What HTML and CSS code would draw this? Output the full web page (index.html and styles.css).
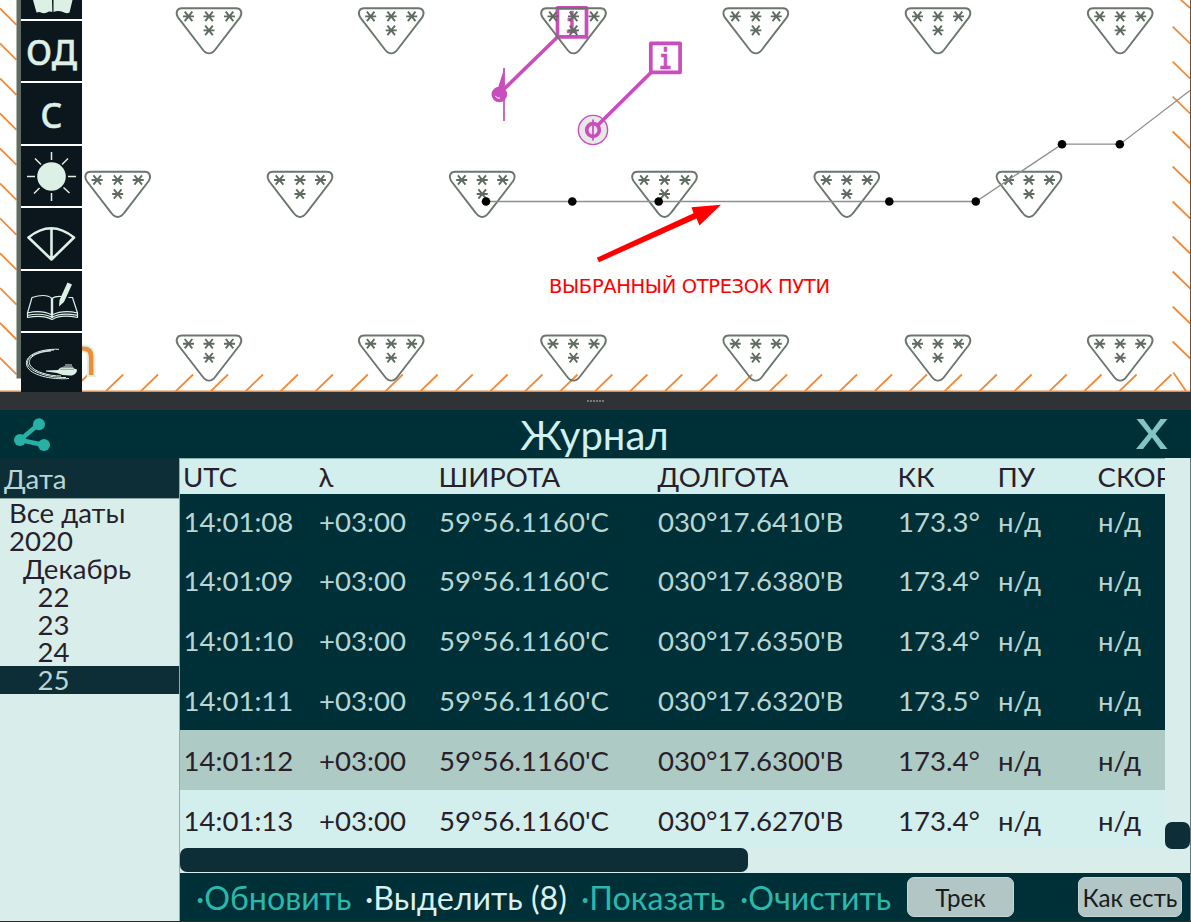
FILE: index.html
```
<!DOCTYPE html>
<html lang="ru">
<head>
<meta charset="utf-8">
<title>Журнал</title>
<link rel="stylesheet" href="styles.css">
</head>
<body>
<div class="app">
  <section class="map">
    <svg class="chart" width="1191" height="392" viewBox="0 0 1191 392">
      <defs>
        <path id="star" d="M-5.500 0H5.500M-3.800 -4.700L3.800 4.700M3.800 -4.700L-3.800 4.700" class="star"/>
        <g id="ice">
          <path class="tri" d="M-27 0H27C32 0 34 4.500 30.800 9.500L6.500 41C2.500 46.500 -2.500 46.500 -6.500 41L-30.800 9.500C-34 4.500 -32 0 -27 0Z"/>
          <use href="#star" x="-20.500" y="8.200"/><use href="#star" y="8.200"/><use href="#star" x="20.500" y="8.200"/><use href="#star" y="22.200"/>
        </g>
      </defs>
      <path class="hatch" d="M0 8.400l16.500 16.500M0 43.400l16.500 16.500M0 78.400l16.500 16.500M0 113.400l16.500 16.500M0 148.400l16.500 16.500M0 183.400l16.500 16.500M0 218.300l16.500 16.500M0 253.200l16.500 16.500M0 288.100l16.500 16.500M0 323l16.500 16.500M0 357.900l16.500 16.500"/>
      <path class="hatch" d="M1180 -1l10 9M1172.700 26.700l17.500 17M1172.700 61.600l17.500 17M1172.700 96.600l17.500 17M1172.700 131.500l17.500 17M1172.700 166.500l17.500 17M1172.700 201.500l17.500 17M1172.700 236.500l17.500 17M1172.700 271.500l17.500 17M1172.700 306.500l17.500 17M1172.700 341.500l17.500 17M1173.300 372.500L1186 391M0 391.400H1190"/>
      <path class="hatch" d="M70.800 391.500l17.500 -17M105.700 391.500l17.500 -17M140.600 391.500l17.500 -17M175.600 391.500l17.500 -17M210.500 391.500l17.500 -17M245.500 391.500l17.500 -17M280.400 391.500l17.500 -17M315.400 391.500l17.500 -17M350.300 391.500l17.500 -17M385.300 391.500l17.500 -17M420.200 391.500l17.500 -17M455.200 391.500l17.500 -17M490.100 391.500l17.500 -17M525 391.500l17.500 -17M560 391.500l17.500 -17M594.900 391.500l17.500 -17M629.900 391.500l17.500 -17M664.800 391.500l17.500 -17M699.800 391.500l17.500 -17M734.700 391.500l17.500 -17M769.600 391.500l17.500 -17M804.600 391.500l17.500 -17M839.500 391.500l17.500 -17M874.500 391.500l17.500 -17M909.400 391.500l17.500 -17M944.400 391.500l17.500 -17M979.300 391.500l17.500 -17M1014.200 391.500l17.500 -17M1049.200 391.500l17.500 -17M1084.100 391.500l17.500 -17M1119.100 391.500l17.500 -17M1154 391.500l17.500 -17"/>
      <rect x="16.500" width="5" height="378.500" fill="#5f6b60"/>
      <text class="place halo" x="65.500" y="375">n</text><text class="place" x="65.500" y="375">n</text>
      <g class="pink">
        <rect x="557.500" y="7.800" width="29" height="29"/><path d="M557.500 37L499 94"/>
        <rect x="650.800" y="43.300" width="29.300" height="29"/>
        <circle cx="593" cy="130" r="14.600" class="ring"/><path d="M651 72.500L598 125"/>
        <circle cx="593" cy="130" r="6.300"/><path class="thin" d="M593 119.500V140.500M504 68V121"/>
        <path d="M504.500 67.500V94H496Z" class="pinkfill"/><circle cx="499.300" cy="94.500" r="7.800" class="pinkfill"/>
        <path d="M495 96q3 3 5 2" class="glint"/>
      </g>
      <text class="info" transform="translate(571.500 33) scale(.72 1)">i</text><text class="info" transform="translate(665 69) scale(.72 1)">i</text>
      <use href="#ice" x="209" y="8.200"/><use href="#ice" x="391.200" y="8.200"/><use href="#ice" x="573.500" y="8.200"/><use href="#ice" x="755.800" y="8.200"/><use href="#ice" x="938" y="8.200"/><use href="#ice" x="1120.200" y="8.200"/>
      <use href="#ice" x="117.700" y="171.800"/><use href="#ice" x="300" y="171.800"/><use href="#ice" x="482.200" y="171.800"/><use href="#ice" x="664.500" y="171.800"/><use href="#ice" x="846.800" y="171.800"/><use href="#ice" x="1029" y="171.800"/>
      <use href="#ice" x="209" y="335.500"/><use href="#ice" x="391.200" y="335.500"/><use href="#ice" x="573.500" y="335.500"/><use href="#ice" x="755.800" y="335.500"/><use href="#ice" x="938" y="335.500"/><use href="#ice" x="1120.200" y="335.500"/>
      <path class="track" d="M486 201.500H976L1062 144.200H1120L1190 90.500"/>
      <g fill="#000"><circle cx="486" cy="201.500" r="4.300"/><circle cx="572.300" cy="201.500" r="4.300"/><circle cx="658.700" cy="201.500" r="4.300"/><circle cx="889.300" cy="201.500" r="4.300"/><circle cx="975.800" cy="201.500" r="4.300"/><circle cx="1062" cy="144.200" r="4.300"/><circle cx="1119.800" cy="144.200" r="4.300"/></g>
      <path fill="#f00" d="M596.800 257.700L693.500 213.300L691.500 207.300L721 204.800L699.500 225.500L696.500 218.500L599 262.200Z"/>
      <text class="note" x="549" y="293" textLength="281">ВЫБРАННЫЙ ОТРЕЗОК ПУТИ</text>
      <path d="M1190.500 0V392" stroke="#70503c"/>
    </svg>
    <nav class="tools">
      <div class="tool first"><svg width="61" height="18" viewBox="0 0 61 18"><path fill="#dcf0e6" d="M12 0H31L31.300 12Q28 11 26 12.500Q22 14 18.500 12L15.500 12.500ZM32.500 0H51.500L48.500 12.500Q45 14 42 12Q37 10 32.500 12Z"/></svg></div>
      <div class="tool"><span class="od">ОД</span></div>
      <div class="tool"><span class="od">С</span></div>
      <div class="tool"><svg width="61" height="61" viewBox="0 0 61 61"><circle cx="30.500" cy="31.500" r="14.300" fill="#dcf0e6"/><path class="ic" stroke-width="1.500" d="M30.500 7V15M30.500 48V56M6 31.500H14M47 31.500H55M14 13.500L20 19.500M47 13.500L41 19.500M13 48.500L18.500 43M48.500 48L42.500 42.500"/></svg></div>
      <div class="tool"><svg width="61" height="60" viewBox="0 0 61 60"><path class="ic" stroke-width="2.600" d="M7.500 28.500Q30 10 53 28.500L30.500 50.500ZM30.500 20V50"/></svg></div>
      <div class="tool"><svg width="61" height="60" viewBox="0 0 61 60"><path class="ic" stroke-width="1.200" d="M47.500 26.500H51.500L56.500 42Q42 38.500 31 44Q20 38.500 6.500 42L11 26.500Q25 22 31 27.500Q34 25 40.500 25.500M30.400 27.500V47M31.600 27.500V47M6.500 42V46.500Q22 43.500 31 48.500Q40 43 56.500 46.500V42M6.500 44.300Q22 41.500 31 46.300Q40 41 56.500 44.300"/><path fill="#dcf0e6" d="M46.500 11.500L51 13.500L43 31L38 35.500L38.500 29Z"/></svg></div>
      <div class="tool last"><svg width="61" height="58" viewBox="0 0 61 58"><path class="ic" stroke-width="1" d="M38 16.300C18 15.500 2 23 6 33C9 42 30 47 48 45.500M30 18C13 19 6 26 9 32C13 39 28 43 40 43M33 17C16 18 4 24 7 32C10 39 28 45 45 44.500"/><path fill="#dcf0e6" d="M25 37.500L37 37L39 35L43 33.500H51.500L53 35.500L56 36.500Q56 41 51 42.500Q42 43 36 40L25 38.500Z"/><path d="M39 36.300H53M41 34.500H52" stroke="#6d7d78" stroke-width=".7"/><path class="ic" d="M44 32H51"/></svg></div>
    </nav>
  </section>
  <div class="splitter"><i></i><i></i><i></i><i></i><i></i><i></i></div>
  <header class="titlebar">
    <svg class="share" width="40" height="36" viewBox="0 0 40 36"><path d="M29 8L10 24L34 29" fill="none" stroke="#26b0a6" stroke-width="4.500"/><g fill="#26b0a6"><circle cx="29" cy="8.300" r="6"/><circle cx="10" cy="24" r="6"/><circle cx="34" cy="29" r="6"/></g></svg>
    <h1 class="title">Журнал</h1>
    <svg class="close" width="32" height="30" viewBox="0 0 32 30"><path fill="#82c4c6" d="M.5 0H7.500L16 11.500L24.500 0H31.500L19.500 14.800L31.500 30H24.500L16 18.500L7 30H0L12.500 14.800Z"/></svg>
  </header>
  <main class="journal">
    <aside class="dates">
      <div class="dates-head">Дата</div>
      <ul class="tree"><li>Все даты</li><li>2020</li><li class="month">Декабрь</li><li class="day">22</li><li class="day">23</li><li class="day">24</li><li class="day active">25</li></ul>
    </aside>
    <section class="log">
      <div class="view">
        <div class="table">
          <div class="row head"><span>UTC</span><span>λ</span><span>ШИРОТА</span><span>ДОЛГОТА</span><span>КК</span><span>ПУ</span><span>СКОРОСТЬ</span></div>
          <div class="row start"><span>14:01:08</span><span>+03:00</span><span>59°56.1160'С</span><span>030°17.6410'В</span><span>173.3°</span><span>н/д</span><span>н/д</span></div>
          <div class="row"><span>14:01:09</span><span>+03:00</span><span>59°56.1160'С</span><span>030°17.6380'В</span><span>173.4°</span><span>н/д</span><span>н/д</span></div>
          <div class="row"><span>14:01:10</span><span>+03:00</span><span>59°56.1160'С</span><span>030°17.6350'В</span><span>173.4°</span><span>н/д</span><span>н/д</span></div>
          <div class="row"><span>14:01:11</span><span>+03:00</span><span>59°56.1160'С</span><span>030°17.6320'В</span><span>173.5°</span><span>н/д</span><span>н/д</span></div>
          <div class="row alt"><span>14:01:12</span><span>+03:00</span><span>59°56.1160'С</span><span>030°17.6300'В</span><span>173.4°</span><span>н/д</span><span>н/д</span></div>
          <div class="row light"><span>14:01:13</span><span>+03:00</span><span>59°56.1160'С</span><span>030°17.6270'В</span><span>173.4°</span><span>н/д</span><span>н/д</span></div>
        </div>
        <div class="vscroll"><div class="vthumb"></div></div>
      </div>
      <div class="hscroll"><div class="hthumb"></div></div>
      <footer class="actions">
        <span class="act a1">·Обновить</span><span class="act a2">·Выделить (8)</span><span class="act a3">·Показать</span><span class="act a4">·Очистить</span>
        <button class="btn track-btn">Трек</button><button class="btn asis">Как есть</button>
      </footer>
    </section>
  </main>
</div>
</body>
</html>
```
FILE: styles.css
```
* { box-sizing: border-box; }
body { margin: 0; background: #fff; font-family: Lato, "Noto Sans", sans-serif; overflow: hidden; }
.app { width: 1191px; height: 922px; display: flex; flex-direction: column; overflow: hidden; border-bottom: 1px solid #33292d; }
.map { position: relative; height: 392px; flex: none; overflow: hidden; }
.chart { display: block; }
.star { stroke: #5f6b60; stroke-width: 1.9; fill: none; }
.tri { stroke: #6b766d; stroke-width: 1.9; fill: none; }
.hatch { stroke: #f08b3c; stroke-width: 1.8; fill: none; }
.pink { stroke: #c94dbd; stroke-width: 3.7; fill: none; stroke-linejoin: round; }
.pink .ring { stroke-width: 1.4; fill: #e8e8e8; }
.pink .thin { stroke-width: 1.7; }
.pink .pinkfill { fill: #c94dbd; stroke: none; }
.pink .glint { stroke: #fff; stroke-width: 1; }
.info { font: bold 27px "DejaVu Sans Mono", monospace; fill: #c94dbd; stroke: #c94dbd; stroke-width: .6; text-anchor: middle; }
.track { stroke: #8f8f8f; stroke-width: 1.3; fill: none; }
.note { font: 19.5px "DejaVu Sans", sans-serif; fill: #f00; }
.place { font: 52px "Noto Sans", sans-serif; fill: #f08b3c; }
.place.halo { stroke: #d9f3dc; stroke-width: 4; fill: #d9f3dc; }
.tools { position: absolute; left: 21px; top: 0; width: 61px; height: 392px; display: flex; flex-direction: column; gap: 2px; background: #fff; }
.tool { height: 60.6px; background: #0b161d; display: flex; align-items: center; justify-content: center; flex: none; overflow: hidden; }
.tool.first { height: 18.5px; }
.tool.last { height: 60px; align-items: flex-start; }
.ic { stroke: #dcf0e6; fill: none; stroke-linejoin: round; }
.od { padding-top: 3px; font: 500 34px/60px "Noto Sans", sans-serif; color: #dcf0e6; -webkit-text-stroke: .5px #dcf0e6; }
.splitter { height: 18px; flex: none; background: #2f3335; display: flex; align-items: center; justify-content: center; gap: 1px; }
.splitter i { width: 2px; height: 2px; background: #77797a; }
.titlebar { height: 48px; flex: none; display: grid; grid-template-columns: 60px 1fr 60px; grid-template-rows: 48px; align-items: center; background: #003037; }
.share { margin-left: 10px; }
.title { margin: 0; padding: 2px 2px 0 0; font-size: 40px; font-weight: 400; line-height: 48px; text-align: center; color: #d2f0ee; }
.close { margin-left: 5px; }
.journal { display: flex; flex: 1; min-height: 0; border-right: 1px solid #65777a; background: #d9eeeb; }
.dates { width: 180px; flex: none; border-right: 1px solid #93aaa9; font-size: 27.6px; color: #291f2c; }
.dates-head { height: 41px; line-height: 42px; padding-left: 4px; background: #0d2d37; color: #b9d6d3; border-bottom: 1px solid #8ba8a9; }
.tree { margin: 0; padding: 0; list-style: none; }
.tree li { height: 27.9px; line-height: 28px; padding-left: 9px; }
.tree .month { padding-left: 23px; }
.tree .day { padding-left: 37.5px; }
.tree .active { background: #0d2d37; color: #b9d6d3; }
.log { flex: 1; min-width: 0; display: flex; flex-direction: column; }
.view { display: flex; height: 390px; }
.table { width: 985px; overflow: hidden; border-top: 1px solid #8bb0b0; }
.row { display: grid; grid-template-columns: 135.5px 120px 219px 240px 100px 100px 200px; width: 1114px; height: 60px; line-height: 62px; padding-left: 3.5px; background: #003037; color: #b9d6d3; font-size: 27.6px; white-space: nowrap; }
.row.head { height: 35px; line-height: 36px; padding-left: 3px; background: #d2efed; color: #291f2c; font-size: 27.6px; }
.row.start { height: 56px; line-height: 55px; }
.row.alt { background: #adcac4; color: #291f2c; }
.row.light { height: 59px; background: #d2efed; color: #291f2c; }
.vscroll { width: 25px; display: flex; align-items: flex-end; }
.vthumb { width: 25px; height: 27px; border-radius: 7px; background: #0d2d37; transform: translateY(1px); }
.hscroll { height: 25px; }
.hthumb { width: 568px; height: 24px; border-radius: 7px; background: #0d2d37; }
.actions { height: 48px; display: flex; align-items: center; padding-left: 16px; background: #003037; color: #2bb8ac; font-size: 32.2px; white-space: nowrap; }
.a1 { width: 169px; } .a2 { width: 216px; color: #d9f0ee; } .a3 { width: 159px; } .a4 { width: 167px; }
.btn { height: 40px; padding: 0; border: 1px solid #c6d6d4; border-radius: 7px; background: #b1c6c5; color: #1b1b1d; font: 24.2px Lato, "Noto Sans", sans-serif; }
.track-btn { width: 107px; }
.asis { width: 104px; margin-left: 64px; }
```
